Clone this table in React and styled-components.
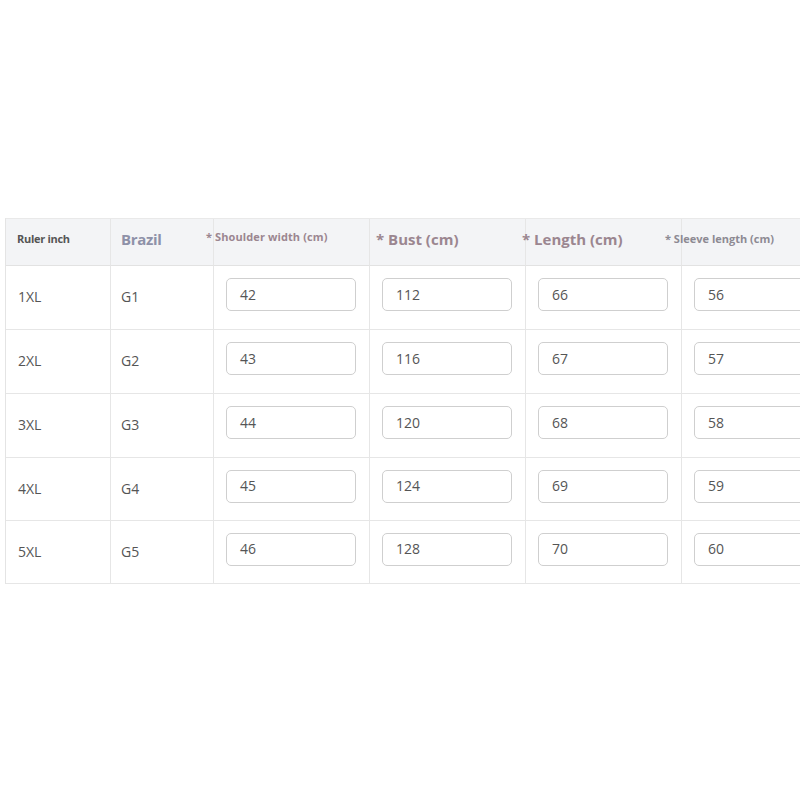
import React from "react";
import styled, { createGlobalStyle } from "styled-components";

const GlobalStyle = createGlobalStyle`
  html, body {
    margin: 0;
    padding: 0;
    background: #ffffff;
    overflow: hidden;
  }
  body {
    font-family: "Open Sans", "Liberation Sans", sans-serif;
  }
`;

const Page = styled.div`
  width: 800px;
  height: 800px;
  overflow: hidden;
  padding: 218px 0 0 5px;
  box-sizing: border-box;
`;

const Table = styled.div`
  display: grid;
  grid-template-columns: 105px 103px 156px 156px 156px 156px;
  grid-template-rows: 47px 64px 64px 64px 63px 63px;
  width: max-content;
  border-left: 1px solid #e4e4e4;
  border-top: 1px solid #e9e9e9;
`;

const HeadCell = styled.div`
  background: #f3f4f6;
  border-right: 1px solid #e6e6e6;
  border-bottom: 1px solid #e2e2e2;
  display: flex;
  align-items: center;
  padding-bottom: ${(p) => p.$lift || 7}px;
  box-sizing: border-box;
  overflow: visible;
  white-space: nowrap;
`;

const HeadText = styled.span`
  position: relative;
  margin-left: ${(p) => p.$indent}px;
  font-size: ${(p) => p.$size}px;
  font-weight: 700;
  color: ${(p) => p.$color};
  letter-spacing: ${(p) => p.$spacing || 0}px;
`;

const Cell = styled.div`
  border-right: 1px solid #e6e6e6;
  border-bottom: 1px solid #e6e6e6;
  display: flex;
  align-items: center;
  padding-left: ${(p) => p.$pad || 12}px;
  padding-bottom: 2px;
  box-sizing: border-box;
  font-size: 14px;
  color: #555555;
`;

const InputCell = styled(Cell)`
  padding-bottom: 6px;
`;

const Field = styled.div`
  width: 130px;
  height: 33px;
  flex-shrink: 0;
  box-sizing: border-box;
  border: 1px solid #cfcfcf;
  border-radius: 5px;
  background: #fff;
  display: flex;
  align-items: center;
  padding-left: 13px;
  padding-bottom: 1px;
  font-size: 14px;
  color: #555555;
`;

const headers = [
  { text: "Ruler inch", indent: 11, size: 11, color: "#555555", spacing: -0.3 },
  { text: "Brazil", indent: 10, size: 15, color: "#8e91a8", spacing: -0.3 },
  { text: "* Shoulder width (cm)", indent: -8, size: 11, color: "#9b8690", lift: 11, spacing: 0.1 },
  { text: "* Bust (cm)", indent: 6, size: 15, color: "#9b8690", lift: 6 },
  { text: "* Length (cm)", indent: -4, size: 15, color: "#9b8690", lift: 6 },
  { text: "* Sleeve length (cm)", indent: -17, size: 11, color: "#8d8a93", lift: 8, spacing: 0 },
];

const rows = [
  ["1XL", "G1", 42, 112, 66, 56],
  ["2XL", "G2", 43, 116, 67, 57],
  ["3XL", "G3", 44, 120, 68, 58],
  ["4XL", "G4", 45, 124, 69, 59],
  ["5XL", "G5", 46, 128, 70, 60],
];

export default function App() {
  return (
    <Page>
      <GlobalStyle />
      <Table>
        {headers.map((h) => (
          <HeadCell key={h.text} $lift={h.lift}>
            <HeadText $indent={h.indent} $size={h.size} $color={h.color} $spacing={h.spacing}>
              {h.text}
            </HeadText>
          </HeadCell>
        ))}
        {rows.map((r) => (
          <React.Fragment key={r[0]}>
            <Cell>{r[0]}</Cell>
            <Cell $pad={10}>{r[1]}</Cell>
            {r.slice(2).map((v, i) => (
              <InputCell key={i}>
                <Field>{v}</Field>
              </InputCell>
            ))}
          </React.Fragment>
        ))}
      </Table>
    </Page>
  );
}
